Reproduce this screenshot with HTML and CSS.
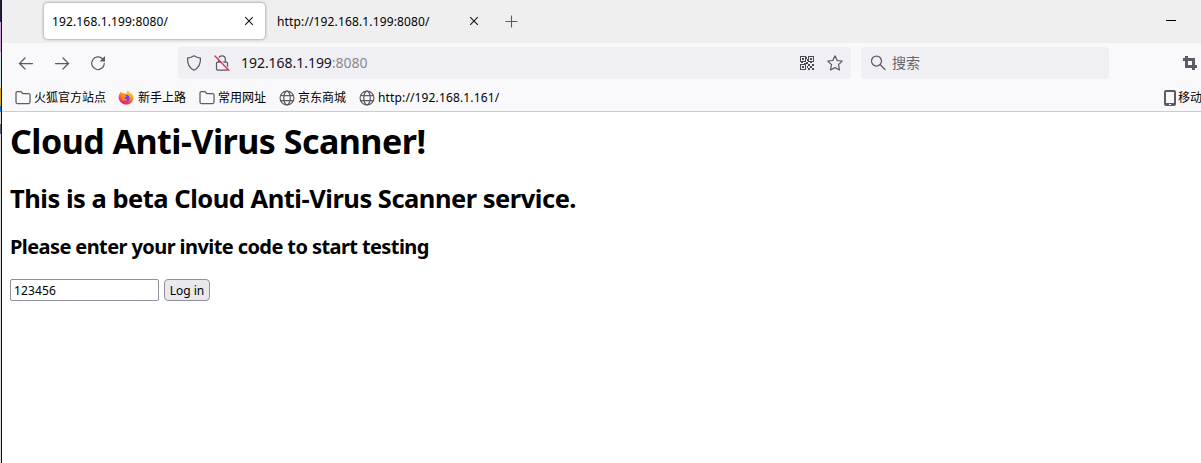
FILE: index.html
```html
<!DOCTYPE html>
<html lang="zh-CN">
<head>
<meta charset="utf-8">
<title>192.168.1.199:8080/</title>
<link rel="stylesheet" href="styles.css">
</head>
<body>
<div class="edge"></div>
<div class="window">
  <div class="tabs">
    <div class="tab active"><span class="tab-title">192.168.1.199:8080/</span>
      <svg class="close" width="10" height="10" viewBox="0 0 10 10"><path d="M1.200 1.200l7.600 7.600M8.800 1.200l-7.600 7.600"/></svg></div>
    <div class="tab"><span class="tab-title">http://192.168.1.199:8080/</span>
      <svg class="close" width="10" height="10" viewBox="0 0 10 10"><path d="M1.200 1.200l7.600 7.600M8.800 1.200l-7.600 7.600"/></svg></div>
    <svg class="plus" width="13" height="13" viewBox="0 0 13 13"><path d="M6.500 .5v12M.5 6.500h12"/></svg>
    <div class="minimize"></div>
  </div>
  <div class="nav">
    <svg class="ic back" width="16" height="16" viewBox="0 0 16 16"><path d="M14.500 8.500H1.500M7 3L1.500 8.500 7 14"/></svg>
    <svg class="ic forward" width="16" height="16" viewBox="0 0 16 16"><path d="M1.500 8.500h13M9 3l5.500 5.500L9 14"/></svg>
    <svg class="ic reload" width="16" height="16" viewBox="0 0 16 16"><path d="M12.500 3.800A6.300 6.300 0 1 0 14.300 8.500"/><path class="solid" d="M15 1v5.500H9.500z"/></svg>
    <div class="urlbar">
      <svg class="ic" width="16" height="16" viewBox="0 0 16 16"><path d="M8 .8C6 2.200 4 2.800 1.500 3.100 1.300 8.500 3 13 8 15.200 13 13 14.700 8.500 14.500 3.100 12 2.800 10 2.200 8 .8z"/></svg>
      <svg class="ic lock" width="16" height="16" viewBox="0 0 16 16"><path d="M4.700 7V4.200a3.300 3.300 0 0 1 6.600 0V7M3.500 7h9a1 1 0 0 1 1 1v6a1 1 0 0 1-1 1h-9a1 1 0 0 1-1-1V8a1 1 0 0 1 1-1z"/><path class="halo" d="M2 .5l13.500 14.500"/><path class="slash" d="M1 1l14 14.500"/></svg>
      <span class="url">192.168.1.199<span class="port">:8080</span></span>
      <svg class="qr" width="14" height="14" viewBox="0 0 14 14" shape-rendering="crispEdges"><path fill-rule="evenodd" d="M0 0h6v6H0zM1 1v4h4V1zM8 0h6v6H8zM9 1v4h4V1zM0 8h6v6H0zM1 9v4h4V9zM2 2h2v2H2zM10 2h2v2h-2zM2 10h2v2H2zM6 1h1v2H6zM7 3h1v2H7zM6 6h2v2H6zM1 6h2v1H1zM4 7h2v1H4zM8 8h2v2H8zM12 8h2v2h-2zM10 10h2v2h-2zM8 12h2v2H8zM12 12h2v2h-2zM10 6h2v1h-2zM7 10h1v2H7z"/></svg>
      <svg class="ic star" width="16" height="16" viewBox="0 0 16 16"><path d="M8 .8l2.200 4.700 5 .6-3.700 3.500 1 5.400L8 12.600 3.500 15l1-5.400L.8 6.100l5-.6z"/></svg>
    </div>
    <div class="search">
      <svg class="ic" width="16" height="16" viewBox="0 0 16 16"><circle cx="6.500" cy="6" r="5"/><path d="M10.300 9.800l4.700 4.700"/></svg>
      <span>搜索</span>
    </div>
    <svg class="crop" width="14" height="14" viewBox="0 0 14 14" shape-rendering="crispEdges"><path d="M2 0h3v9h9v3H4q-2 0-2-2zM0 2h2v3H0zM5 2h5q2 0 2 2v5H9V5H5zM9 11h3v3H9z"/></svg>
  </div>
  <div class="bookmarks">
    <div class="bm b1"><svg class="ic" width="16" height="16" viewBox="0 0 16 16"><path d="M2.500 1.500h3.300l2 2h5.700A1.500 1.500 0 0 1 15 5v7a1.500 1.500 0 0 1-1.500 1.500h-11A1.500 1.500 0 0 1 1 12V3a1.500 1.500 0 0 1 1.500-1.500z"/></svg><span>火狐官方站点</span></div>
    <div class="bm b2"><svg width="16" height="16" viewBox="0 0 16 16"><defs><linearGradient id="fx" x1=".8" y1="0" x2=".3" y2="1"><stop offset="0" stop-color="#ffe33c"/><stop offset=".4" stop-color="#ff9a1f"/><stop offset=".75" stop-color="#ff3a50"/><stop offset="1" stop-color="#e51b70"/></linearGradient></defs><path fill="url(#fx)" d="M2 3l.7-1.600L4 3l2 .2L8.500 4 9 .3c2 1 3 2 3.500 3.400l1-.5C15 5 15.600 6.500 15.500 8.500A7.500 7.300 0 1 1 2 3z"/><circle cx="8" cy="8.300" r="3.500" fill="#7542e5"/><path fill="#ff8b22" d="M3 5c2-1.300 3.500-1 4.700.5L9 6 7 7.500c-1 .7 0 2.300 2.500 1.700C8 12 4 11 3.500 8z"/></svg><span>新手上路</span></div>
    <div class="bm b3"><svg class="ic" width="16" height="16" viewBox="0 0 16 16"><path d="M2.500 1.500h3.300l2 2h5.700A1.500 1.500 0 0 1 15 5v7a1.500 1.500 0 0 1-1.500 1.500h-11A1.500 1.500 0 0 1 1 12V3a1.500 1.500 0 0 1 1.500-1.500z"/></svg><span>常用网址</span></div>
    <div class="bm b4"><svg class="ic" width="16" height="16" viewBox="0 0 16 16"><circle cx="8" cy="8" r="6.900"/><ellipse cx="8" cy="8" rx="3.200" ry="6.900"/><path d="M1.500 5.500h13M1.500 10.500h13"/></svg><span>京东商城</span></div>
    <div class="bm b5"><svg class="ic" width="16" height="16" viewBox="0 0 16 16"><circle cx="8" cy="8" r="6.900"/><ellipse cx="8" cy="8" rx="3.200" ry="6.900"/><path d="M1.500 5.500h13M1.500 10.500h13"/></svg><span>http://192.168.1.161/</span></div>
    <div class="bm mobile"><svg width="12" height="16" viewBox="0 0 12 16"><path fill="#5b5b66" fill-rule="evenodd" d="M2 0h8a2 2 0 0 1 2 2v12a2 2 0 0 1-2 2H2a2 2 0 0 1-2-2V2a2 2 0 0 1 2-2zM2 2v11h8V2zM5 14v1h2v-1z"/></svg><span>移动</span></div>
  </div>
  <main class="page">
    <h1>Cloud Anti-Virus Scanner!</h1>
    <h2>This is a beta Cloud Anti-Virus Scanner service.</h2>
    <h3>Please enter your invite code to start testing</h3>
    <form class="login"><input class="code" type="text" value="123456"><button class="submit" type="button">Log in</button></form>
  </main>
</div>
</body>
</html>
```
FILE: styles.css
```css
* { box-sizing: border-box; }
body { margin: 0; width: 1201px; height: 463px; overflow: hidden; display: flex; background: #fff; color: #15141a; font: 12px/16px "Noto Sans", "Noto Sans CJK SC", sans-serif; }
svg { display: block; flex: none; }
.edge { width: 2px; flex: none; border-right: 1px solid #101018; background: linear-gradient(#25223a 0 22px, #c9a5dc 22px 52px, #d5e2e8 52px 88px, #d5a21e 88px 106px, #1c78c0 106px 112px, #d8d8d8 112px 124px, #567 124px 134px, #dcdcdc 134px); }
.window { flex: 1; min-width: 0; display: flex; flex-direction: column; }
.tabs { height: 43px; flex: none; background: #efefef; display: flex; align-items: flex-start; padding: 3px 0 0 42px; }
.tab { height: 36px; width: 221px; display: flex; align-items: center; justify-content: space-between; padding: 0 11px 0 8px; margin-right: 4px; color: #000; white-space: nowrap; }
.tab-title { letter-spacing: .14px; padding-top: 1px; }
.active { background: #fff; border-radius: 4px; box-shadow: 0 0 3px rgba(0,0,0,.5); }
.close { stroke: #15141a; stroke-width: 1.1; fill: none; }
.plus { stroke: #5b5b66; stroke-width: 1.1; margin: 12px 0 0 11px; }
.minimize { width: 10px; height: 1px; background: #000; margin: 17px 25px 0 auto; }
.nav { height: 41px; flex: none; background: #f9f9fb; display: flex; align-items: center; padding: 0 0 1px 16px; }
.ic { fill: none; stroke: #5b5b66; stroke-width: 1.25; stroke-linecap: round; stroke-linejoin: round; }
.solid { fill: #5b5b66; stroke: none; }
.forward { margin-left: 20px; }
.reload { margin-left: 20px; }
.urlbar { margin-left: 72px; width: 673px; height: 32px; border-radius: 4px; background: #f0eff4; display: flex; align-items: center; padding: 0 8px; }
.lock { margin-left: 12px; }
.halo { stroke: #f0eff4; }
.slash { stroke: #e22850; }
.url { font-size: 14px; letter-spacing: -.04px; margin-left: 11px; color: #15141a; }
.port { color: #8a8a92; }
.qr { fill: #4a4a55; margin-left: auto; }
.star { margin-left: 13px; }
.search { margin-left: 10px; width: 248px; height: 32px; border-radius: 4px; background: #f0eff4; display: flex; align-items: center; gap: 6px; padding-left: 9px; font-size: 14px; color: #66656d; }
.crop { fill: #5b5b66; margin-left: auto; margin-right: 4px; }
.bookmarks { height: 28px; flex: none; background: #f9f9fb; border-bottom: 1px solid #ccccd0; display: flex; align-items: center; padding-left: 13px; color: #000; white-space: nowrap; }
.bm { display: flex; align-items: center; gap: 3px; flex: none; }
.b1 { width: 103px; }
.b2 { width: 81px; gap: 4px; }
.b3 { width: 80px; }
.b4 { width: 80px; }
.b5 { letter-spacing: .14px; }
.mobile { margin-left: auto; gap: 2px; width: 37px; }
.page { padding: 7px 8px; color: #000; }
h1, h2, h3 { margin: 0; white-space: nowrap; }
h1 { font-size: 34px; line-height: 45px; letter-spacing: -.52px; }
h2 { font-size: 25.500px; line-height: 34px; margin-top: 17px; letter-spacing: -.49px; }
h3 { font-size: 20px; line-height: 28px; margin-top: 18px; letter-spacing: -.59px; }
.login { display: flex; gap: 5px; margin-top: 18px; }
.code { width: 149px; height: 22px; border: 1px solid #8f8f9d; border-radius: 2px; padding: 1px 3px; font: 12px "Noto Sans", sans-serif; letter-spacing: .14px; color: #000; background: #fff; }
.submit { width: 46px; height: 22px; border: 1px solid #8f8f9d; border-radius: 4px; padding: 0; font: 12px "Noto Sans", sans-serif; color: #000; background: #e9e9ed; }
```
